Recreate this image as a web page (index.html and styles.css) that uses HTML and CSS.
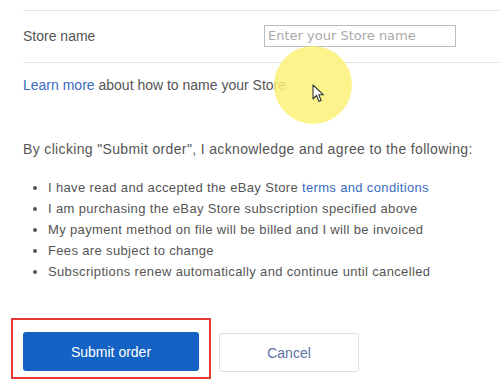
FILE: index.html
```html
<!DOCTYPE html>
<html>
<head>
<meta charset="utf-8">
<link rel="stylesheet" href="styles.css">
</head>
<body>
<div class="page">
  <div class="row">
    <label class="label">Store name</label>
    <input class="input" type="text" placeholder="Enter your Store name">
  </div>
  <p class="learn"><a class="link" href="#">Learn more</a> about how to name your Store.</p>
  <p class="agree">By clicking "Submit order", I acknowledge and agree to the following:</p>
  <ul class="list">
    <li>I have read and accepted the eBay Store <a class="link" href="#">terms and conditions</a></li>
    <li>I am purchasing the eBay Store subscription specified above</li>
    <li>My payment method on file will be billed and I will be invoiced</li>
    <li>Fees are subject to change</li>
    <li>Subscriptions renew automatically and continue until cancelled</li>
  </ul>
  <div class="actions">
    <div class="highlight">
      <button class="btn primary">Submit order</button>
    </div>
    <button class="btn secondary">Cancel</button>
  </div>
</div>
<div class="spot"></div>
<svg class="cursor" width="14" height="20" viewBox="0 0 14 20">
  <path d="M1 1 L1 15 L4.5 11.5 L7 17.5 L9.2 16.5 L6.8 10.8 L11.5 10.8 Z" fill="#fff" stroke="#333" stroke-width="1.1" stroke-linejoin="round"/>
</svg>
</body>
</html>
```
FILE: styles.css
```css
html, body {
  margin: 0;
  padding: 0;
  background: #fff;
}
body {
  font-family: "Liberation Sans", Arial, sans-serif;
  color: #555;
  overflow: hidden;
  width: 500px;
  height: 386px;
  position: relative;
}
.page {
  padding: 10px 0 0 23px;
}
.row {
  display: flex;
  align-items: center;
  height: 51px;
  border-top: 1px solid #e3e3e3;
  border-bottom: 1px solid #e3e3e3;
}
.label {
  font-size: 14px;
  color: #555;
  width: 241px;
  margin-top: -2px;
}
.input {
  box-sizing: border-box;
  width: 192px;
  height: 22px;
  margin-top: -2px;
  border: 1px solid #bbb;
  padding: 0 3px;
  font-family: "DejaVu Sans", Verdana, sans-serif;
  font-size: 13px;
  color: #555;
  outline: none;
}
.input::placeholder {
  color: #aaa;
}
.learn {
  margin: 14px 0 0;
  font-size: 14px;
  line-height: 16px;
}
.link {
  color: #3a6bbf;
  text-decoration: none;
}
.agree {
  margin: 48px 0 0;
  font-size: 14px;
  line-height: 16px;
  letter-spacing: 0.35px;
}
.list {
  margin: 20px 0 0;
  padding: 0 0 0 25px;
  font-size: 13px;
  line-height: 21px;
  letter-spacing: 0.35px;
}
.actions {
  display: flex;
  align-items: center;
  margin-top: 36px;
}
.highlight {
  border: 2px solid #e53a35;
  padding: 12px 10px 6px 10px;
  margin-left: -12px;
}
.btn {
  font-family: "Liberation Sans", Arial, sans-serif;
  font-size: 14px;
  border-radius: 3px;
  height: 39px;
  cursor: pointer;
}
.primary {
  width: 176px;
  background: #1462c4;
  color: #fff;
  border: none;
}
.secondary {
  width: 140px;
  margin-left: 8px;
  margin-top: 12px;
  margin-bottom: 4px;
  background: #fff;
  color: #5b6fa3;
  border: 1px solid #dedede;
}
.spot {
  position: absolute;
  left: 274px;
  top: 46px;
  width: 78px;
  height: 78px;
  border-radius: 50%;
  background: rgba(253, 241, 120, 0.85);
}
.cursor {
  position: absolute;
  left: 312px;
  top: 84px;
}
```
